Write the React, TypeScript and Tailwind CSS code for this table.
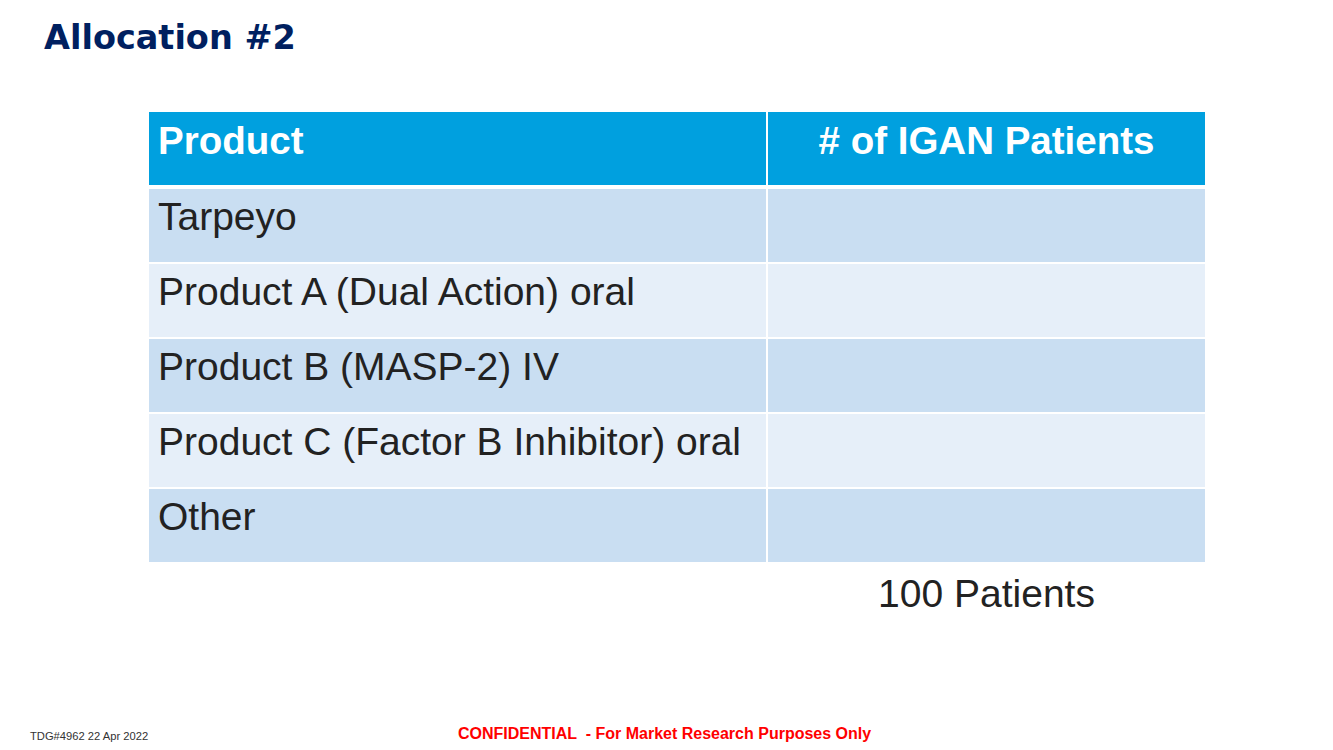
export default function App() {
  const rows = [
    "Tarpeyo",
    "Product A (Dual Action) oral",
    "Product B (MASP-2) IV",
    "Product C (Factor B Inhibitor) oral",
    "Other",
  ]

  return (
    <div className="w-[1333px] h-[750px] bg-white flex flex-col overflow-hidden">
      {/* Title */}
      <h1 className="pl-[44px] pt-[19px] text-[33.5px] leading-[38px] font-bold text-[#002060] font-['DejaVu_Sans',sans-serif]">
        Allocation #2
      </h1>

      {/* Table */}
      <div className="ml-[149px] mt-[55px] w-[1056px] flex flex-col gap-[2px] font-['Liberation_Sans',Arial,sans-serif] text-[39px] leading-[44px]">
        <div className="grid grid-cols-[617px_437px] gap-[2px] mb-[2px] text-[38.5px]">
          <div className="h-[73px] bg-[#00a0df] pl-[9px] pt-[7px] font-bold text-white">Product</div>
          <div className="h-[73px] bg-[#00a0df] pt-[7px] text-center font-bold text-white">
            # of IGAN Patients
          </div>
        </div>
        {rows.map((r, i) => (
          <div key={r} className="grid grid-cols-[617px_437px] gap-[2px]">
            <div
              className={`h-[73px] pl-[9px] pt-[6px] text-[#222222] whitespace-nowrap ${
                i % 2 === 0 ? "bg-[#c9def2]" : "bg-[#e6eff9]"
              }`}
            >
              {r}
            </div>
            <div className={`h-[73px] ${i % 2 === 0 ? "bg-[#c9def2]" : "bg-[#e6eff9]"}`} />
          </div>
        ))}
        <div className="grid grid-cols-[617px_437px] gap-[2px] mt-[8px]">
          <div />
          <div className="text-center text-[#222222]">100 Patients</div>
        </div>
      </div>

      {/* Footer */}
      <div className="mt-auto pb-[4px] flex items-end font-['Liberation_Sans',Arial,sans-serif]">
        <span className="pl-[30px] w-[458px] text-[11.2px] text-[#333333] pb-[1px]">TDG#4962 22 Apr 2022</span>
        <span className="text-[16px] font-bold text-[#ff0000] whitespace-pre">
          CONFIDENTIAL  - For Market Research Purposes Only
        </span>
      </div>
    </div>
  )
}
